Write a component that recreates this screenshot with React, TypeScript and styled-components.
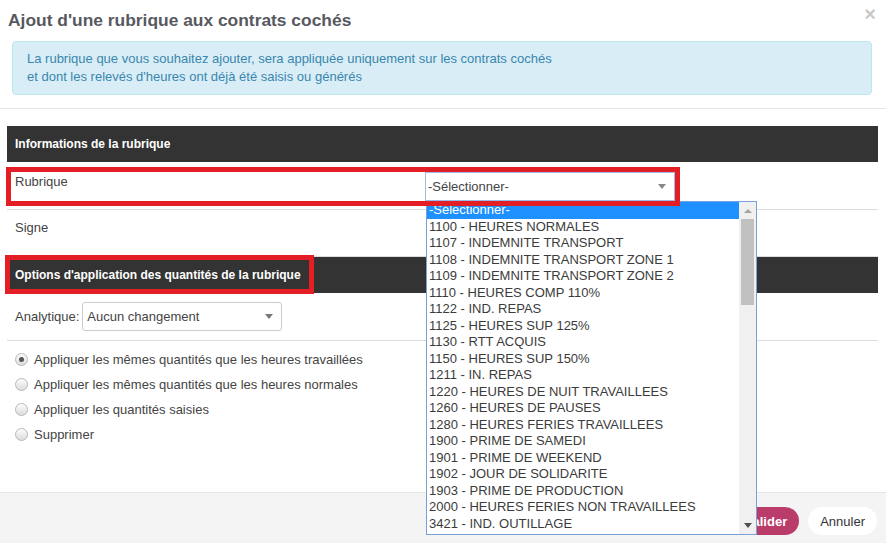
import React from 'react';
import styled, { createGlobalStyle } from 'styled-components';

const GlobalStyle = createGlobalStyle`
	html, body {
		margin: 0;
		padding: 0;
		background: #fff;
	}
	body {
		font-family: 'Liberation Sans', Arial, sans-serif;
		font-size: 13px;
		color: #444;
	}
	* {
		box-sizing: border-box;
	}
`;

const Modal = styled.div`
	width: 886px;
	height: 543px;
	display: flex;
	flex-direction: column;
	overflow: hidden;
	background: #fff;
`;

const ModalHeader = styled.div`
	padding-bottom: 13px;
	border-bottom: 1px solid #e5e5e5;
`;

const TitleRow = styled.div`
	display: flex;
	justify-content: space-between;
	align-items: flex-start;
	padding: 9px 10px 0 8px;
`;

const Title = styled.h4`
	margin: 0;
	font-size: 17.4px;
	line-height: 22px;
	font-weight: bold;
	color: #58595f;
`;

const CloseButton = styled.span`
	font-size: 20px;
	line-height: 1;
	font-weight: bold;
	color: #c9c9c9;
	margin-top: -5px;
	cursor: pointer;
`;

const InfoAlert = styled.div`
	margin: 10px 14px 0 12px;
	padding: 8px 14px;
	border: 1px solid #bce8f1;
	border-radius: 4px;
	background: #d9edf7;
	color: #3a87ad;
	line-height: 18px;
`;

const ModalBody = styled.div`
	flex: 1;
	padding: 17px 8px 0 7px;
`;

const SectionBar = styled.div<{ $marked?: boolean }>`
	display: flex;
	align-items: center;
	height: 36px;
	padding-left: ${(p) => (p.$marked ? '0' : '8px')};
	background: #333;
	color: #fff;
	font-size: 12px;
	font-weight: bold;
`;

const Marked = styled.div`
	position: relative;
	&::after {
		content: '';
		position: absolute;
		inset: 0;
		border: 5px solid #e31e24;
		z-index: 2;
		pointer-events: none;
	}
`;

const BarMark = styled(Marked)`
	align-self: stretch;
	display: flex;
	align-items: center;
	margin: -2px 0 -1px -2px;
	padding: 0 13px 0 10px;
`;

const Row = styled.div<{ $pad: string; $minHeight?: number }>`
	display: flex;
	align-items: flex-start;
	padding: ${(p) => p.$pad};
	min-height: ${(p) => (p.$minHeight ? `${p.$minHeight}px` : 'auto')};
	border-bottom: 1px solid #ddd;
`;

const FieldMark = styled(Marked)`
	display: flex;
	width: 674px;
	margin-left: -1px;
	padding: 5px;
`;

const FieldLabel = styled.div`
	flex: 1;
	padding: 1px 0 0 4px;
	line-height: 18px;
	color: #444;
`;

const PlainLabel = styled.div`
	line-height: 18px;
	color: #444;
	padding-left: 8px;
`;

const SelectWrap = styled.div`
	position: relative;
	width: 250px;
`;

const SelectBox = styled.div<{ $focused?: boolean; $width?: number }>`
	display: flex;
	align-items: center;
	justify-content: space-between;
	width: ${(p) => (p.$width ? `${p.$width}px` : '100%')};
	height: 29px;
	padding: 0 8px 0 ${(p) => (p.$focused ? '2px' : '4px')};
	border: 1px solid ${(p) => (p.$focused ? '#9bbbe8' : '#ccc')};
	border-radius: ${(p) => (p.$focused ? '0' : '3px')};
	background: #fff;
	color: #444;
`;

const Caret = styled.span<{ $color?: string }>`
	width: 0;
	height: 0;
	border-left: 4px solid transparent;
	border-right: 4px solid transparent;
	border-top: 5px solid ${(p) => p.$color || '#888'};
`;

const Dropdown = styled.div`
	position: absolute;
	top: 100%;
	left: 1px;
	width: 331px;
	height: 334px;
	display: flex;
	border: 1px solid #7b9fd9;
	background: #fff;
	z-index: 1;
`;

const OptionList = styled.div`
	flex: 1;
	overflow: hidden;
`;

const Option = styled.div<{ $selected?: boolean }>`
	height: 16.5px;
	line-height: 16.5px;
	padding-left: 2px;
	white-space: nowrap;
	color: ${(p) => (p.$selected ? '#fff' : '#3b3b3b')};
	background: ${(p) => (p.$selected ? '#1e90ff' : 'transparent')};
`;

const Scrollbar = styled.div`
	width: 17px;
	display: flex;
	flex-direction: column;
	background: #f0f0f0;
`;

const ScrollArrow = styled.div`
	height: 17px;
	display: flex;
	align-items: center;
	justify-content: center;
`;

const ArrowUp = styled.span`
	width: 0;
	height: 0;
	border-left: 4px solid transparent;
	border-right: 4px solid transparent;
	border-bottom: 4px solid #a3a3a3;
`;

const ScrollThumb = styled.div`
	height: 86px;
	margin: 0 2px;
	background: #c1c1c1;
`;

const ScrollSpacer = styled.div`
	flex: 1;
`;

const AnalyticRow = styled.div`
	display: flex;
	align-items: center;
	padding: 9px 0 9px 8px;
	border-bottom: 1px solid #ddd;
`;

const InlineLabel = styled.span`
	margin-right: 3px;
	color: #444;
`;

const RadioList = styled.div`
	padding: 6px 0 0 8px;
`;

const RadioRow = styled.label`
	display: flex;
	align-items: center;
	gap: 6px;
	height: 25px;
	color: #444;
`;

const RadioDot = styled.span<{ $checked?: boolean }>`
	position: relative;
	width: 13px;
	height: 13px;
	border-radius: 50%;
	border: 1px solid #b8b8b8;
	background: linear-gradient(#fdfdfd, #dcdcdc);
	&::after {
		content: '';
		display: ${(p) => (p.$checked ? 'block' : 'none')};
		position: absolute;
		top: 3px;
		left: 3px;
		width: 5px;
		height: 5px;
		border-radius: 50%;
		background: #555;
	}
`;

const ModalFooter = styled.div`
	height: 51px;
	display: flex;
	justify-content: flex-end;
	align-items: flex-start;
	gap: 9px;
	padding: 14px 9px 0 0;
	border-top: 1px solid #e5e5e5;
	background: #f4f4f4;
`;

const PillButton = styled.button<{ $primary?: boolean }>`
	height: 28px;
	padding: 0 12px;
	border: none;
	border-radius: 14px;
	font-family: inherit;
	font-size: 13px;
	font-weight: ${(p) => (p.$primary ? 'bold' : 'normal')};
	color: ${(p) => (p.$primary ? '#fff' : '#333')};
	background: ${(p) => (p.$primary ? '#b93c6b' : '#fff')};
`;

const rubriques = [
	'-Sélectionner-',
	'1100 - HEURES NORMALES',
	'1107 - INDEMNITE TRANSPORT',
	'1108 - INDEMNITE TRANSPORT ZONE 1',
	'1109 - INDEMNITE TRANSPORT ZONE 2',
	'1110 - HEURES COMP 110%',
	'1122 - IND. REPAS',
	'1125 - HEURES SUP 125%',
	'1130 - RTT ACQUIS',
	'1150 - HEURES SUP 150%',
	'1211 - IN. REPAS',
	'1220 - HEURES DE NUIT TRAVAILLEES',
	'1260 - HEURES DE PAUSES',
	'1280 - HEURES FERIES TRAVAILLEES',
	'1900 - PRIME DE SAMEDI',
	'1901 - PRIME DE WEEKEND',
	'1902 - JOUR DE SOLIDARITE',
	'1903 - PRIME DE PRODUCTION',
	'2000 - HEURES FERIES NON TRAVAILLEES',
	'3421 - IND. OUTILLAGE'
];

const options = [
	'Appliquer les mêmes quantités que les heures travaillées',
	'Appliquer les mêmes quantités que les heures normales',
	'Appliquer les quantités saisies',
	'Supprimer'
];

const App = () => {
	return (
		<>
			<GlobalStyle />
			<Modal>
				<ModalHeader>
					<TitleRow>
						<Title>Ajout d'une rubrique aux contrats cochés</Title>
						<CloseButton>×</CloseButton>
					</TitleRow>
					<InfoAlert>
						La rubrique que vous souhaitez ajouter, sera appliquée uniquement sur les contrats cochés
						<br />
						et dont les relevés d'heures ont déjà été saisis ou générés
					</InfoAlert>
				</ModalHeader>

				<ModalBody>
					<SectionBar>Informations de la rubrique</SectionBar>

					<Row $pad="5px 0 3px 0">
						<FieldMark>
							<FieldLabel>Rubrique</FieldLabel>
							<SelectWrap>
								<SelectBox $focused>
									<span>-Sélectionner-</span>
									<Caret />
								</SelectBox>
								<Dropdown>
									<OptionList>
										{rubriques.map((r, i) => (
											<Option key={r} $selected={i === 0}>
												{r}
											</Option>
										))}
									</OptionList>
									<Scrollbar>
										<ScrollArrow>
											<ArrowUp />
										</ScrollArrow>
										<ScrollThumb />
										<ScrollSpacer />
										<ScrollArrow>
											<Caret $color="#505050" />
										</ScrollArrow>
									</Scrollbar>
								</Dropdown>
							</SelectWrap>
						</FieldMark>
					</Row>

					<Row $pad="9px 0 0 0" $minHeight={47}>
						<PlainLabel>Signe</PlainLabel>
					</Row>

					<SectionBar $marked>
						<BarMark>Options d'application des quantités de la rubrique</BarMark>
					</SectionBar>

					<AnalyticRow>
						<InlineLabel>Analytique:</InlineLabel>
						<SelectBox $width={200}>
							<span>Aucun changement</span>
							<Caret $color="#777" />
						</SelectBox>
					</AnalyticRow>

					<RadioList>
						{options.map((o, i) => (
							<RadioRow key={o}>
								<RadioDot $checked={i === 0} />
								{o}
							</RadioRow>
						))}
					</RadioList>
				</ModalBody>

				<ModalFooter>
					<PillButton $primary>Valider</PillButton>
					<PillButton>Annuler</PillButton>
				</ModalFooter>
			</Modal>
		</>
	);
};

export default App;
